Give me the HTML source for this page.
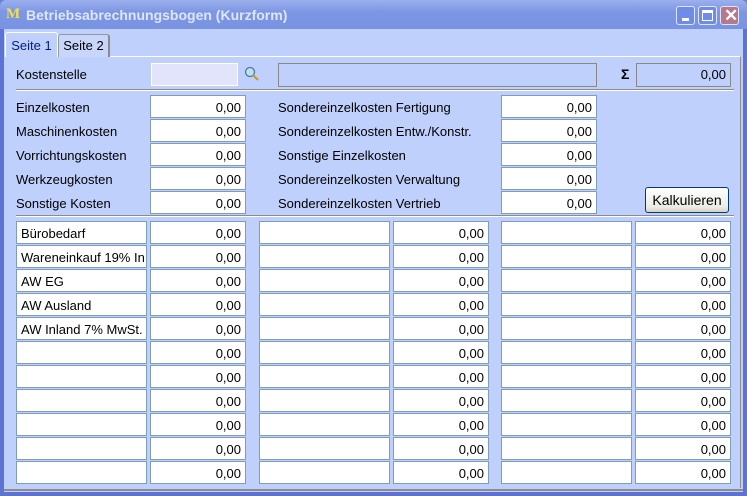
<!DOCTYPE html>
<html><head><style>
*{margin:0;padding:0;box-sizing:border-box}
body{width:747px;height:496px;overflow:hidden;background:#6b7fd8;font-family:"Liberation Sans",sans-serif;font-size:13px;color:#000;position:relative}
.win{position:absolute;left:0;top:0;width:747px;height:496px;background:#5d73d4;border-radius:6px 6px 0 0}
.title{position:absolute;left:0;top:0;width:747px;height:29px;background:linear-gradient(#9bb0ec,#7d97e4 40%,#7893e2);border-radius:6px 6px 0 0}
.title .t{position:absolute;left:26px;top:7px;color:#dfe6fb;font-weight:bold;font-size:14px}
.title .m{position:absolute;left:6px;top:6px;color:#f4e04a;font-weight:bold;font-family:"Liberation Serif",serif;font-size:15px}
.btn{position:absolute;top:6px;width:19px;height:19px;border:1px solid #dfe6fb;border-radius:3px;background:#6f8ce6}
.client{position:absolute;left:4px;top:29px;width:739px;height:463px;background:#c0d0fc}
.bot{position:absolute;left:4px;top:489px;width:739px;height:2px;background:#8c8c8c}
.a{position:absolute}
.lbl{position:absolute;font-size:13px}
.inp{position:absolute;background:#fff;border:1px solid #7f9db9;text-align:right;padding-right:4px;line-height:23px;height:23px}
.txt{position:absolute;background:#fff;border:1px solid #7f9db9;padding-left:4px;line-height:23px;height:23px;white-space:nowrap;overflow:hidden}
.tab{position:absolute;border:1px solid #919b9c;border-bottom:none;background:#c8d6fc;border-radius:3px 3px 0 0;text-align:center}
</style></head><body>
<div class="win"></div>
<div class="title"><span class="m">M</span><span class="t">Betriebsabrechnungsbogen (Kurzform)</span>
<div class="btn" style="left:676px"><div class="a" style="left:5px;top:11px;width:7px;height:3px;background:#fff"></div></div>
<div class="btn" style="left:698px"><div class="a" style="left:3px;top:3px;width:11px;height:11px;border:1px solid #fff;border-top:3px solid #fff"></div></div>
<div class="btn" style="left:720px;background:#b47a8c"><span class="a" style="left:3px;top:-1px;color:#fff;font-size:17px;font-weight:bold">✕</span></div>
</div>
<div class="client"></div>
<div class="bot"></div>
<div class="a" style="left:5px;top:56px;width:736px;height:432px;border-top:1px solid #fff;border-right:1px solid #8c8c8c"></div>
<div class="tab" style="left:5px;top:32px;width:53px;height:25px;background:#c0d0fc;border-color:#fff"><span style="position:relative;top:5px;color:#00208c">Seite 1</span></div>
<div class="tab" style="left:58px;top:34px;width:52px;height:23px;border-right:2px solid #8c8c8c"><span style="position:relative;top:3px">Seite 2</span></div>
<div class="lbl" style="left:16px;top:67px">Kostenstelle</div>
<div class="a" style="left:151px;top:63px;width:87px;height:23px;background:#e1e4fb;border:1px solid #fff"></div>
<svg class="a" style="left:244px;top:66px" width="16" height="16"><circle cx="6" cy="6" r="4.5" fill="#bfe0f0" stroke="#4a7aa0" stroke-width="1.3"/><line x1="9" y1="9" x2="14" y2="14" stroke="#c89a20" stroke-width="2.2"/></svg>
<div class="a" style="left:278px;top:63px;width:319px;height:24px;border:1px solid #888"></div>
<div class="lbl" style="left:621px;top:66px;font-size:14px;font-weight:bold">Σ</div>
<div class="a" style="left:636px;top:63px;width:95px;height:24px;border:1px solid #888;text-align:right;padding-right:4px;line-height:21px">0,00</div>
<div class="a" style="left:16px;top:89px;width:718px;height:2px;border-top:1px solid #8c8c8c;border-bottom:1px solid #fff"></div>

<div class="lbl" style="left:16px;top:100px">Einzelkosten</div>
<div class="lbl" style="left:16px;top:124px">Maschinenkosten</div>
<div class="lbl" style="left:16px;top:148px">Vorrichtungskosten</div>
<div class="lbl" style="left:16px;top:172px">Werkzeugkosten</div>
<div class="lbl" style="left:16px;top:196px">Sonstige Kosten</div>
<div class="lbl" style="left:278px;top:100px">Sondereinzelkosten Fertigung</div>
<div class="lbl" style="left:278px;top:124px">Sondereinzelkosten Entw./Konstr.</div>
<div class="lbl" style="left:278px;top:148px">Sonstige Einzelkosten</div>
<div class="lbl" style="left:278px;top:172px">Sondereinzelkosten Verwaltung</div>
<div class="lbl" style="left:278px;top:196px">Sondereinzelkosten Vertrieb</div>
<div id="top"></div>
<div class="a" style="left:645px;top:187px;width:84px;height:26px;border:1px solid #003c74;border-radius:3px;background:linear-gradient(#fff,#ecebe6 80%,#d6d0c5);text-align:center;line-height:25px;font-size:14px">Kalkulieren</div>
<div class="a" style="left:16px;top:215px;width:718px;height:2px;border-top:1px solid #8c8c8c;border-bottom:1px solid #fff"></div>
<div id="grid"></div>
<script>
var h='';
for(var i=0;i<5;i++){var y=95+i*24;
h+='<div class="inp" style="left:150px;top:'+y+'px;width:96px">0,00</div>';
h+='<div class="inp" style="left:501px;top:'+y+'px;width:96px">0,00</div>';}
document.getElementById('top').outerHTML=h;
var n=['Bürobedarf','Wareneinkauf 19% In','AW EG','AW Ausland','AW Inland 7% MwSt.'];
h='';
for(var i=0;i<11;i++){var y=221+i*24;
h+='<div class="txt" style="left:16px;top:'+y+'px;width:131px">'+(n[i]||'')+'</div>';
h+='<div class="inp" style="left:150px;top:'+y+'px;width:96px">0,00</div>';
h+='<div class="txt" style="left:259px;top:'+y+'px;width:131px"></div>';
h+='<div class="inp" style="left:393px;top:'+y+'px;width:96px">0,00</div>';
h+='<div class="txt" style="left:501px;top:'+y+'px;width:131px"></div>';
h+='<div class="inp" style="left:635px;top:'+y+'px;width:96px">0,00</div>';}
document.getElementById('grid').outerHTML=h;
</script>
</body></html>
